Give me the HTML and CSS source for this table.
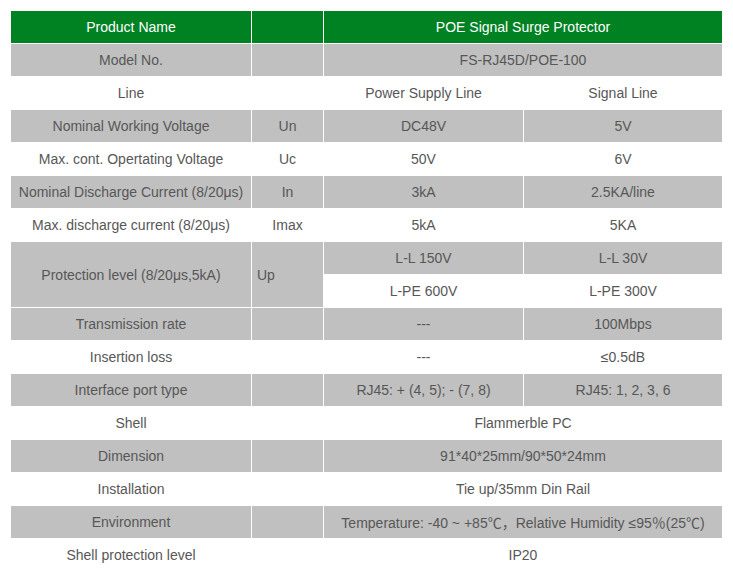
FILE: index.html
```html
<!DOCTYPE html>
<html>
<head>
<meta charset="utf-8">
<link rel="stylesheet" href="styles.css">
</head>
<body>
<div class="wrap">
<table class="spec">
<colgroup><col class="c1"><col class="c2"><col class="c3"><col class="c4"></colgroup>
<tr class="head"><td>Product Name</td><td></td><td colspan="2">POE Signal Surge Protector</td></tr>
<tr class="g"><td>Model No.</td><td></td><td colspan="2">FS-RJ45D/POE-100</td></tr>
<tr><td>Line</td><td></td><td>Power Supply Line</td><td>Signal Line</td></tr>
<tr class="g"><td>Nominal Working Voltage</td><td>Un</td><td>DC48V</td><td>5V</td></tr>
<tr><td>Max. cont. Opertating Voltage</td><td>Uc</td><td>50V</td><td>6V</td></tr>
<tr class="g"><td>Nominal Discharge Current (8/20μs)</td><td>In</td><td>3kA</td><td>2.5KA/line</td></tr>
<tr><td>Max. discharge current (8/20μs)</td><td>Imax</td><td>5kA</td><td>5KA</td></tr>
<tr class="g"><td rowspan="2">Protection level (8/20μs,5kA)</td><td rowspan="2" class="left">Up</td><td>L-L 150V</td><td>L-L 30V</td></tr>
<tr><td>L-PE 600V</td><td>L-PE 300V</td></tr>
<tr class="g"><td>Transmission rate</td><td></td><td>---</td><td>100Mbps</td></tr>
<tr><td>Insertion loss</td><td></td><td>---</td><td>≤0.5dB</td></tr>
<tr class="g"><td>Interface port type</td><td></td><td>RJ45: + (4, 5); - (7, 8)</td><td>RJ45: 1, 2, 3, 6</td></tr>
<tr><td>Shell</td><td></td><td colspan="2">Flammerble PC</td></tr>
<tr class="g"><td>Dimension</td><td></td><td colspan="2">91*40*25mm/90*50*24mm</td></tr>
<tr><td>Installation</td><td></td><td colspan="2">Tie up/35mm Din Rail</td></tr>
<tr class="g"><td>Environment</td><td></td><td colspan="2">Temperature: -40 ~ +85℃，Relative Humidity ≤95％(25℃)</td></tr>
<tr><td>Shell protection level</td><td></td><td colspan="2">IP20</td></tr>
</table>
</div>
</body>
</html>
```
FILE: styles.css
```css
html, body { margin: 0; padding: 0; background: #fff; }
.wrap { padding: 10px; }
.spec {
  width: 713px;
  table-layout: fixed;
  border-collapse: separate;
  border-spacing: 1px;
  background: #fff;
  font-family: "Liberation Sans", Arial, "Noto Sans CJK SC", sans-serif;
  font-size: 14px;
  color: #575757;
}
.c1 { width: 240px; }
.c2 { width: 71px; }
.c3 { width: 199px; }
.c4 { width: 198px; }
.spec td {
  height: 32px;
  padding: 0;
  text-align: center;
  vertical-align: middle;
  white-space: nowrap;
}
.spec tr.head td { background: #008222; color: #fff; }
.spec tr.g td { background: #c0c0c0; }
.spec td.left { text-align: left; padding-left: 5px; }
```
